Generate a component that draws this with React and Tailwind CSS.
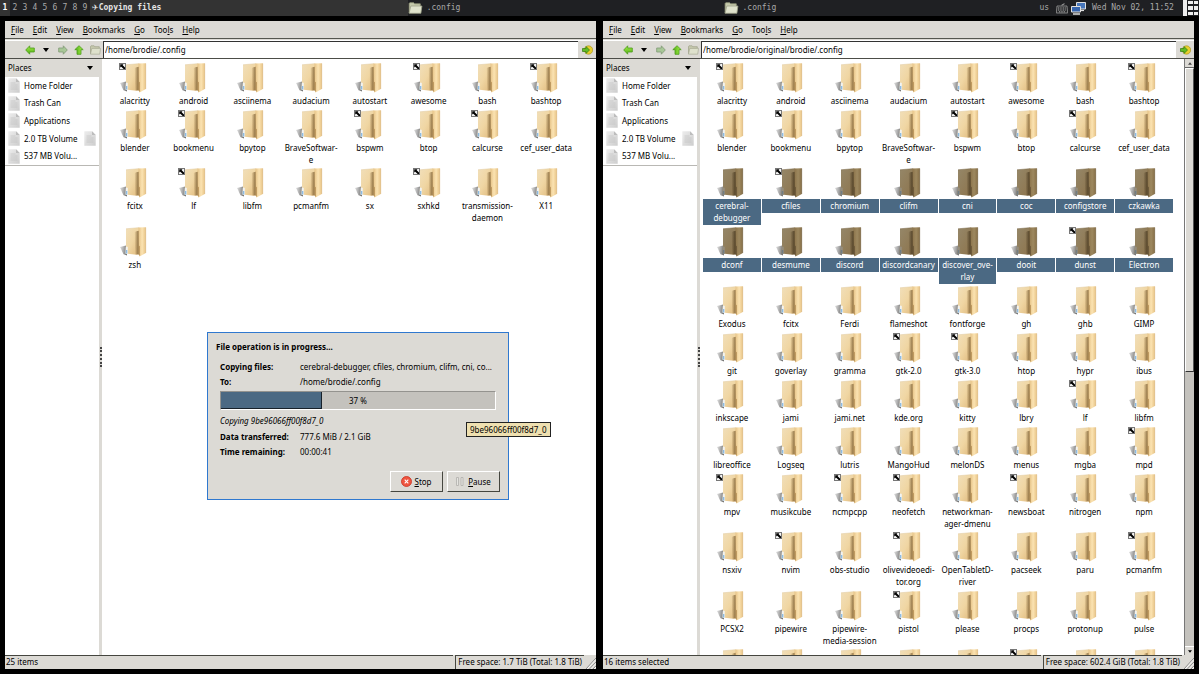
import React from "react";

const leftItems = [
  "alacritty*", "android", "asciinema", "audacium", "autostart", "awesome*", "bash", "bashtop*",
  "blender", "bookmenu*", "bpytop", "BraveSoftwar-\ne", "bspwm*", "btop", "calcurse*", "cef_user_data",
  "fcitx", "lf*", "libfm", "pcmanfm", "sx", "sxhkd*", "transmission-\ndaemon", "X11",
  "zsh",
];

const rightItems = [
  "alacritty*", "android", "asciinema", "audacium", "autostart", "awesome*", "bash", "bashtop*",
  "blender", "bookmenu*", "bpytop", "BraveSoftwar-\ne", "bspwm*", "btop", "calcurse*", "cef_user_data",
  "cerebral-\ndebugger", "cfiles*", "chromium", "clifm", "cni", "coc", "configstore", "czkawka",
  "dconf", "desmume", "discord", "discordcanary", "discover_ove-\nrlay", "dooit", "dunst*", "Electron",
  "Exodus", "fcitx", "Ferdi", "flameshot", "fontforge", "gh", "ghb", "GIMP",
  "git", "goverlay", "gramma", "gtk-2.0*", "gtk-3.0*", "htop", "hypr", "ibus",
  "inkscape", "jami", "jami.net", "kde.org", "kitty", "lbry", "lf*", "libfm",
  "libreoffice", "Logseq", "lutris", "MangoHud", "melonDS", "menus", "mgba", "mpd*",
  "mpv*", "musikcube", "ncmpcpp*", "neofetch*", "networkman-\nager-dmenu", "newsboat*", "nitrogen", "npm",
  "nsxiv", "nvim*", "obs-studio", "olivevideoedi-\ntor.org*", "OpenTabletD-\nriver", "pacseek", "paru", "pcmanfm*",
  "PCSX2", "pipewire", "pipewire-\nmedia-session", "pistol*", "please", "procps", "protonup", "pulse",
  "", "", "", "", "", "*", "", "",
];

const menus = [["F", "ile"], ["E", "dit"], ["V", "iew"], ["B", "ookmarks"], ["G", "o"], ["", "Too", "l", "s"], ["H", "elp"]];
const places = ["Home Folder", "Trash Can", "Applications", "2.0 TB Volume", "537 MB Volu..."];

function Defs() {
  return (
    <svg width="0" height="0" className="absolute" aria-hidden="true">
      <defs>
        <linearGradient id="front" x1="0" y1="0" x2="1" y2="1">
          <stop offset="0" stopColor="#f1dfba" />
          <stop offset="0.5" stopColor="#f0d6a3" />
          <stop offset="1" stopColor="#dfb97c" />
        </linearGradient>
        <linearGradient id="flap" x1="0" y1="0" x2="1" y2="0">
          <stop offset="0" stopColor="#e6c387" />
          <stop offset="0.5" stopColor="#fbe3b2" />
          <stop offset="1" stopColor="#e8c486" />
        </linearGradient>
        <linearGradient id="frontSel" x1="0" y1="0" x2="1" y2="1">
          <stop offset="0" stopColor="#958769" />
          <stop offset="1" stopColor="#8d744c" />
        </linearGradient>
        <linearGradient id="flapSel" x1="0" y1="0" x2="1" y2="0">
          <stop offset="0" stopColor="#8c744b" />
          <stop offset="0.5" stopColor="#9d885f" />
          <stop offset="1" stopColor="#876f47" />
        </linearGradient>
        <linearGradient id="fold" x1="0" y1="0" x2="1" y2="0">
          <stop offset="0" stopColor="#8c6c3c" stopOpacity="0" />
          <stop offset="0.7" stopColor="#7d6034" stopOpacity="0.65" />
          <stop offset="1" stopColor="#8b6c3e" />
        </linearGradient>
        <linearGradient id="foldSel" x1="0" y1="0" x2="1" y2="0">
          <stop offset="0" stopColor="#4f3f25" stopOpacity="0" />
          <stop offset="1" stopColor="#4b3c24" />
        </linearGradient>
        <linearGradient id="shade" x1="0" y1="0" x2="1" y2="0.2">
          <stop offset="0" stopColor="#bbb" stopOpacity="0.5" />
          <stop offset="1" stopColor="#777" />
        </linearGradient>
        <linearGradient id="paper" x1="0" y1="0" x2="1" y2="1">
          <stop offset="0" stopColor="#ededed" />
          <stop offset="1" stopColor="#cdcdcd" />
        </linearGradient>
        <linearGradient id="leaf" x1="0" y1="0" x2="0" y2="1">
          <stop offset="0" stopColor="#a6f04c" />
          <stop offset="1" stopColor="#4fae12" />
        </linearGradient>
      </defs>
    </svg>
  );
}

function Folder({ selected }) {
  return (
    <svg width="30" height="30" viewBox="0 0 30 30" aria-hidden="true">
      <path d="M0 20l7-1.800v10.300l-3.500-1.300-1.500-3-1-2.500z" fill="url(#shade)" />
      <path d="M6 1.800L18 .8h1.500v26.500l-3 .5-11-1.300.5-7z" fill={selected ? "url(#frontSel)" : "url(#front)"} />
      <path d="M6 1.800L19 .6" stroke={selected ? "#7d6b4a" : "#e0cba0"} strokeWidth=".5" />
      <path d="M14.300 5.500c1-1 3-1.700 4.700-1.700v23.500l-3.600.3z" fill={selected ? "url(#foldSel)" : "url(#fold)"} />
      <path d="M18.500.6L25.800.3v25.700L19.500 29.600 18.700 27V20z" fill={selected ? "url(#flapSel)" : "url(#flap)"} />
      <path d="M18.700 18.500l1.300.8v10l-1.300-2z" fill={selected ? "#655336" : "#b48d54"} opacity=".8" />
      <path d="M25.700.5v25.500" stroke={selected ? "#6d5a3a" : "#d5b175"} strokeWidth=".5" />
      <path d="M5.800 20.500c.2-1.500 1.800-1.500 2 0v6.500l-2.200-.2z" fill={selected ? "#968e7c" : "#f2f3f1"} />
      <path d="M5.900 23h1.400v3.600H5.600z" fill={selected ? "#707d84" : "#8dbbe3"} />
    </svg>
  );
}

function LinkBadge() {
  return (
    <svg className="absolute top-0 left-1/2 -ml-4" width="7" height="7" viewBox="0 0 7 7" aria-hidden="true">
      <path d="M0 0h7v7H0z" fill="#777" />
      <path d="M1 1h5v5H1z" fill="#f4f4f4" />
      <path d="M1.200 1.200h3.200L3.700 2.200 6 4.600V6H4.700L2.300 3.700 1.200 4.600z" fill="#000" />
    </svg>
  );
}

function Item({ name, selected }) {
  const link = name.endsWith("*");
  const label = link ? name.slice(0, -1) : name;
  return (
    <li className="relative flex min-w-0 flex-col items-center">
      {link && <LinkBadge />}
      <Folder selected={selected} />
      {label && (
        <span className={`mt-px w-full py-px text-center whitespace-pre ${selected ? "bg-[#4b6983] text-white" : "text-black"}`}>
          {label}
        </span>
      )}
    </li>
  );
}

function Arrow({ rotate, faded }) {
  return (
    <svg width="10" height="10" viewBox="0 0 10 10" className={`${rotate} ${faded ? "opacity-80" : ""}`} aria-hidden="true">
      <path d="M.7 5l4-4.200v2.200h4.600v4H4.700v2.200z" fill={faded ? "#9cc388" : "url(#leaf)"} stroke={faded ? "#6b8a60" : "#4b9a1c"} strokeWidth=".8" />
    </svg>
  );
}

function FolderOpen({ className, w, h }) {
  return (
    <svg width={w} height={h} viewBox="0 0 14 12" className={className} aria-hidden="true">
      <path d="M.6 11V1.500L1.300.7h3.900l.8 1.100h5.800v2" fill="#c5c9ab" stroke="#8f9377" strokeWidth=".8" />
      <path d="M.6 11.300L2.300 4h11.100l-1 7.300z" fill="#dfe2cc" stroke="#9da189" strokeWidth=".8" />
    </svg>
  );
}

function Page() {
  return (
    <svg width="12" height="15" viewBox="0 0 12 15" className="shrink-0" aria-hidden="true">
      <path d="M.3.300h7.700l3.700 3.700v10.700H.3z" fill="url(#paper)" />
      <path d="M8 .3V4h3.700z" fill="#bdbdbd" />
      <path d="M2.500 5h5M2.500 7h7M2.500 9h7M2.500 11h7" stroke="#bebebe" strokeWidth=".6" />
    </svg>
  );
}

function Down() {
  return <svg width="6" height="4" viewBox="0 0 6 4" aria-hidden="true"><path d="M0 0h6L3 4z" fill="#000" /></svg>;
}

function Grip() {
  return (
    <svg width="10" height="12" viewBox="0 0 10 12" className="absolute right-0 bottom-0" aria-hidden="true">
      <path d="M0 12L10 1M3.500 12L10 5M7 12l3-3.200" stroke="#888" strokeWidth="1" />
      <path d="M1.200 12L10 2.300M4.700 12L10 6.300M8.200 12l1.800-2" stroke="#fff" strokeWidth=".8" />
    </svg>
  );
}

function FileWindow({ path, items, selection, status, space, scroll, children }) {
  return (
    <section className="relative flex min-w-0 flex-1 flex-col bg-[#dcdad5]">
      <nav className="flex h-[18px] items-center gap-px border-b border-[#55564f] pt-px pl-[2px]">
        {menus.map((m) => (
          <button key={m.join("")} type="button" className="px-1 leading-[12px]">
            {m.length === 2 ? <><u>{m[0]}</u>{m[1]}</> : <>{m[1]}<u>{m[2]}</u>{m[3]}</>}
          </button>
        ))}
      </nav>
      <div className="mt-px flex h-[19px] items-stretch border-t border-b border-t-white border-b-[#4c4d48]">
        <div className="flex w-[98px] shrink-0 items-center pl-5">
          <button type="button" aria-label="Back"><Arrow rotate="" /></button>
          <button type="button" aria-label="History" className="ml-[8px]"><Down /></button>
          <button type="button" aria-label="Forward" className="ml-[9px]"><Arrow rotate="rotate-180" faded /></button>
          <button type="button" aria-label="Up" className="ml-[6px]"><Arrow rotate="rotate-90" /></button>
          <button type="button" aria-label="Home" className="ml-[6px]"><FolderOpen w={11} h={10} className="opacity-90" /></button>
        </div>
        <input aria-label="Location" defaultValue={path} className="min-w-0 flex-1 border-t border-l border-[#333] bg-white px-px leading-[14px] outline-none" />
        <button type="button" aria-label="Go" className="flex w-[18px] items-center justify-center">
          <svg width="11" height="10" viewBox="0 0 11 10" aria-hidden="true">
            <circle cx="6.500" cy="5" r="4.200" fill="#e8cf2f" stroke="#a18c18" strokeWidth=".6" />
            <path d="M.5 3.500h3.500V1.500L7.500 5 4 8.500v-2H.5z" fill="#62bb25" stroke="#2f7a10" strokeWidth=".7" />
          </svg>
        </button>
      </div>
      <div className="flex min-h-0 flex-1">
        <aside className="flex w-[94px] shrink-0 flex-col bg-white">
          <button type="button" className="flex h-[18px] w-full items-center justify-between bg-[#dcdad5] pr-[6px] pl-[3px]">
            Places<Down />
          </button>
          <ul className="grid h-[89px] auto-rows-fr border-b border-[#b9b8b4]">
            {places.map((p, i) => (
              <li key={p} className="flex items-center gap-1 pr-[3px] pl-[3px] leading-[12px] whitespace-nowrap">
                <Page /><span className="flex-1">{p}</span>{i === 3 && <Page />}
              </li>
            ))}
          </ul>
        </aside>
        <div className="flex w-[3px] shrink-0 items-center justify-center bg-[#dcdad5]">
          <span className="h-5 border-l-2 border-dotted border-[#444]" />
        </div>
        <div className={`min-w-0 flex-1 overflow-hidden bg-white pt-1 ${scroll ? "pr-[11px] pl-[3px]" : "pr-[21px] pl-1"}`}>
          <ul className="grid h-0 grid-cols-8 grid-rows-[47px_58px_59px_59px_47px_47px_47px_47px_58px_59px_58px_47px] gap-x-px leading-[12px]">
            {items.map((n, i) => <Item key={i} name={n} selected={selection && i >= 16 && i < 32} />)}
          </ul>
        </div>
        {scroll && (
          <div className="flex w-[10px] shrink-0 flex-col border-l border-[#777] bg-[#c4c2bd]">
            <button type="button" aria-label="Scroll up" className="flex h-[9px] items-center justify-center border-b border-[#666] bg-[#dcdad5]">
              <svg width="4" height="3" viewBox="0 0 6 4" className="rotate-180"><path d="M0 0h6L3 4z" fill="#444" /></svg>
            </button>
            <div className="h-[51%] border border-t-white border-r-[#555] border-b-[#333] border-l-white bg-[#dcdad5]" />
            <button type="button" aria-label="Scroll down" className="mt-auto flex h-[9px] items-center justify-center border-t border-white bg-[#dcdad5]">
              <svg width="4" height="3" viewBox="0 0 6 4"><path d="M0 0h6L3 4z" fill="#000" /></svg>
            </button>
          </div>
        )}
      </div>
      <footer className="relative flex h-[14px] gap-[2px] pr-[12px] leading-[12px]">
        <span className="flex-1 border-t border-[#45463f] pl-px">{status}</span>
        <span className="border-t border-l border-[#45463f] px-[2px]">{space}</span>
        <Grip />
      </footer>
      {children}
    </section>
  );
}

function Dialog() {
  return (
    <div role="dialog" aria-label="File progress" className="absolute top-[311px] left-[202px] flex w-[302px] flex-col border border-[#2f78cf] bg-[#dcdad5] px-2 pt-[7px] pb-[7px] leading-[13px] whitespace-nowrap">
      <h1 className="font-bold">File operation is in progress...</h1>
      <dl className="mt-[7px] grid grid-cols-[80px_1fr] gap-y-[2px] pl-1">
        <dt className="font-bold">Copying files:</dt><dd>cerebral-debugger, cfiles, chromium, clifm, cni, co...</dd>
        <dt className="font-bold">To:</dt><dd>/home/brodie/.config</dd>
      </dl>
      <div role="progressbar" aria-label="Copy progress" aria-valuenow={37} className="relative mt-[3px] mr-1 ml-1 h-[19px] border border-t-[#94938f] border-r-white border-b-white border-l-[#94938f] bg-[#c4c2bd]">
        <div className="h-full border-r border-b border-[#17212a] bg-[#4b6983]" style={{ width: "37%" }} />
        <span className="absolute inset-0 flex items-center justify-center">37 %</span>
      </div>
      <p className="mt-[4px] pl-1 italic">Copying 9be96066ff00f8d7_0</p>
      <dl className="mt-[3px] grid grid-cols-[80px_1fr] gap-y-[2px] pl-1">
        <dt className="font-bold">Data transferred:</dt><dd>777.6 MiB / 2.1 GiB</dd>
        <dt className="font-bold">Time remaining:</dt><dd>00:00:41</dd>
      </dl>
      <div className="mt-[13px] flex justify-end gap-1">
        <button type="button" className="flex h-[21px] w-[53px] items-center justify-center gap-[2px] border border-t-white border-r-[#45463f] border-b-[#45463f] border-l-white">
          <svg width="11" height="11" viewBox="0 0 11 11" aria-hidden="true">
            <circle cx="5.500" cy="5.500" r="5" fill="#ef5540" stroke="#c9301f" strokeWidth=".8" />
            <path d="M3.700 3.700l3.600 3.600M7.300 3.700L3.700 7.300" stroke="#fff" strokeWidth="1.100" />
          </svg>
          <span><u>S</u>top</span>
        </button>
        <button type="button" className="flex h-[21px] w-[53px] items-center justify-center gap-[4px] border border-t-white border-r-[#45463f] border-b-[#45463f] border-l-white">
          <svg width="8" height="9" viewBox="0 0 8 9" aria-hidden="true">
            <path d="M.5.500h2v8h-2zM5 .5h2v8H5z" fill="#e6e5e1" stroke="#b0afab" strokeWidth=".8" />
          </svg>
          <span><u>P</u>ause</span>
        </button>
      </div>
    </div>
  );
}

export default function App() {
  return (
    <div className="flex h-screen flex-col bg-black font-['Noto_Sans',sans-serif] text-[8px] text-black">
      <Defs />
      <header className="flex h-4 shrink-0 items-center bg-[#1f2023] font-['DejaVu_Sans_Mono',monospace] leading-[16px] text-[#a9a9a9]">
        <div className="flex w-[34%] shrink-0 bg-[#333]">
          {[1, 2, 3, 4, 5, 6, 7, 8, 9].map((n) => (
            <span key={n} className={`w-[10px] text-center ${n === 1 ? "bg-[#333] font-bold text-white" : "bg-[#1f2023]"}`}>{n}</span>
          ))}
          <span className="ml-[2px] font-bold text-[#e4e4e4]"><span className="font-['DejaVu_Sans']">✈</span>Copying files</span>
        </div>
        <span className="flex flex-1 items-center gap-1"><FolderOpen w={15} h={12} />.config</span>
        <span className="flex flex-1 items-center gap-1"><FolderOpen w={15} h={12} />.config</span>
        <span>us</span>
        <svg className="ml-[7px]" width="12" height="12" viewBox="0 0 12 12" aria-hidden="true">
          <path d="M6 4V2.500h2V1" fill="none" stroke="#999" strokeWidth=".8" />
          <path d="M1 4h10l.7 7H.3z" fill="#292a2c" stroke="#999" strokeWidth=".8" />
          <path d="M2 6h8M2 8h8M3 9.800h6" stroke="#aaa" strokeWidth="1" strokeDasharray="1 .7" />
        </svg>
        <svg className="ml-[3px]" width="15" height="13" viewBox="0 0 15 13" aria-hidden="true">
          <path d="M5.500.500h9v6.500h-9z" fill="#4675b9" stroke="#dedede" />
          <path d="M9 8.500h4" stroke="#ddd" strokeWidth="1.200" />
          <path d="M.5 4.500h9V10h-9z" fill="#3564ad" stroke="#dedede" />
          <path d="M2 12h7" stroke="#ddd" strokeWidth="1.500" />
        </svg>
        <span className="ml-[6px] w-[91px]">Wed Nov 02, 11:52</span>
        <svg width="16" height="16" viewBox="0 0 16 16" aria-hidden="true">
          <path d="M0 0h4v16H0zM5 1h5v3H5zM11 1h4v3h-4zM5 6h5v4H5zM11 6h4v4h-4zM5 12h5v3H5zM11 12h4v3h-4z" fill="#eee" />
        </svg>
      </header>
      <main className="flex min-h-0 flex-1 gap-[7px] p-[5px]">
        <FileWindow path="/home/brodie/.config" items={leftItems} status="25 items" space="Free space: 1.7 TiB (Total: 1.8 TiB)">
          <Dialog />
          <div role="tooltip" className="absolute top-[401px] left-[461px] border border-[#222] bg-[#efe0b0] px-[3px] leading-[13px] whitespace-nowrap">9be96066ff00f8d7_0</div>
        </FileWindow>
        <FileWindow path="/home/brodie/original/brodie/.config" items={rightItems} selection scroll status="16 items selected" space="Free space: 602.4 GiB (Total: 1.8 TiB)" />
      </main>
    </div>
  );
}
